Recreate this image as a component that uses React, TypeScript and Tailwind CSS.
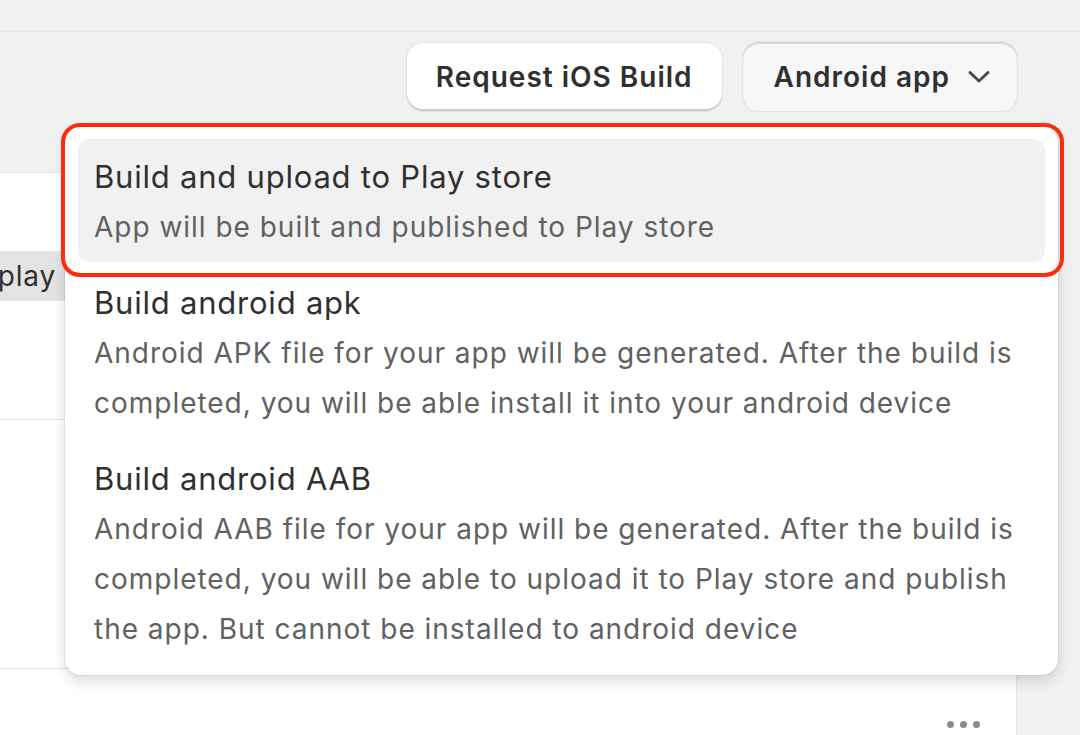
import React from "react";

const font = { fontFamily: "Inter, 'Noto Sans', sans-serif" };

function Item({ title, desc, active }: { title: string; desc: string[]; active?: boolean }) {
  return (
    <div className={`rounded-[12px] pl-[16px] pr-[12px] pt-[12px] pb-[10px] ${active ? "bg-[#f1f1f1]" : ""}`}>
      <div className="text-[31px] leading-[51px] text-[#303030] tracking-[0.78px]">{title}</div>
      {desc.map((d, i) => (
        <div key={i} className="text-[28px] leading-[50px] text-[#616161] tracking-[0.98px] whitespace-nowrap">
          {d}
        </div>
      ))}
    </div>
  );
}

export default function App() {
  return (
    <div className="relative w-[1080px] h-[735px] overflow-hidden bg-[#f1f1f1]" style={font}>
      <div className="h-[32px] border-b border-[#e6e6e6]" />
      <div className="h-[140px] flex justify-end items-start gap-[21px] pr-[63px] pt-[11px]">
        <button className="h-[68px] px-[29px] rounded-[16px] bg-white text-[28px] font-semibold tracking-[1px] text-[#303030] shadow-[0_0_0_1px_#e3e3e3,inset_0_-2px_0_#cccccc]">
          Request iOS Build
        </button>
        <button className="h-[69px] -mt-[1px] pl-[31px] pr-[26px] rounded-[16px] bg-[#f7f7f7] text-[28px] font-semibold tracking-[1px] text-[#303030] flex items-center gap-[17px] shadow-[0_0_0_1px_#e3e3e3,inset_0_2px_1px_#d6d6d6]">
          <span>Android app</span>
          <svg width="24" height="16" viewBox="0 0 24 16" fill="none">
            <path d="M3 3.5 L12 12 L21 3.5" stroke="#4a4a4a" strokeWidth="3" strokeLinecap="round" strokeLinejoin="round" />
          </svg>
        </button>
      </div>
      <div className="flex">
        <div className="w-[1017px] bg-white border-t border-[#e3e3e3] border-r">
          <div className="h-[246px] pt-[78px]">
            <div className="w-[65px] h-[50px] bg-[#e3e3e3] flex items-center justify-end pr-[9px] text-[28px] tracking-[0.8px] text-[#303030]">
              play
            </div>
          </div>
          <div className="h-[249px] border-t border-[#e3e3e3]" />
          <div className="h-[80px] border-t border-[#e3e3e3] flex justify-end items-start pr-[36px] pt-[52px] gap-[6px]">
            <span className="w-[7px] h-[7px] rounded-full bg-[#8a8a8a]" />
            <span className="w-[7px] h-[7px] rounded-full bg-[#8a8a8a]" />
            <span className="w-[7px] h-[7px] rounded-full bg-[#8a8a8a]" />
          </div>
        </div>
      </div>

      <div className="absolute left-[65px] top-[126px] w-[993px] bg-white rounded-[16px] px-[13px] pt-[13px] pb-[11px] flex flex-col gap-[3px] shadow-[0_0_0_1px_rgba(0,0,0,0.06),0_6px_14px_rgba(0,0,0,0.14)]">
        <Item title="Build and upload to Play store" desc={["App will be built and published to Play store"]} active />
        <Item
          title="Build android apk"
          desc={[
            "Android APK file for your app will be generated. After the build is",
            "completed, you will be able install it into your android device",
          ]}
        />
        <Item
          title="Build android AAB"
          desc={[
            "Android AAB file for your app will be generated. After the build is",
            "completed, you will be able to upload it to Play store and publish",
            "the app. But cannot be installed to android device",
          ]}
        />
      </div>

      <div className="absolute left-[61px] top-[123px] w-[1003px] h-[154px] rounded-[19px] border-[4px] border-[#ff2a0c] pointer-events-none" />
    </div>
  );
}
